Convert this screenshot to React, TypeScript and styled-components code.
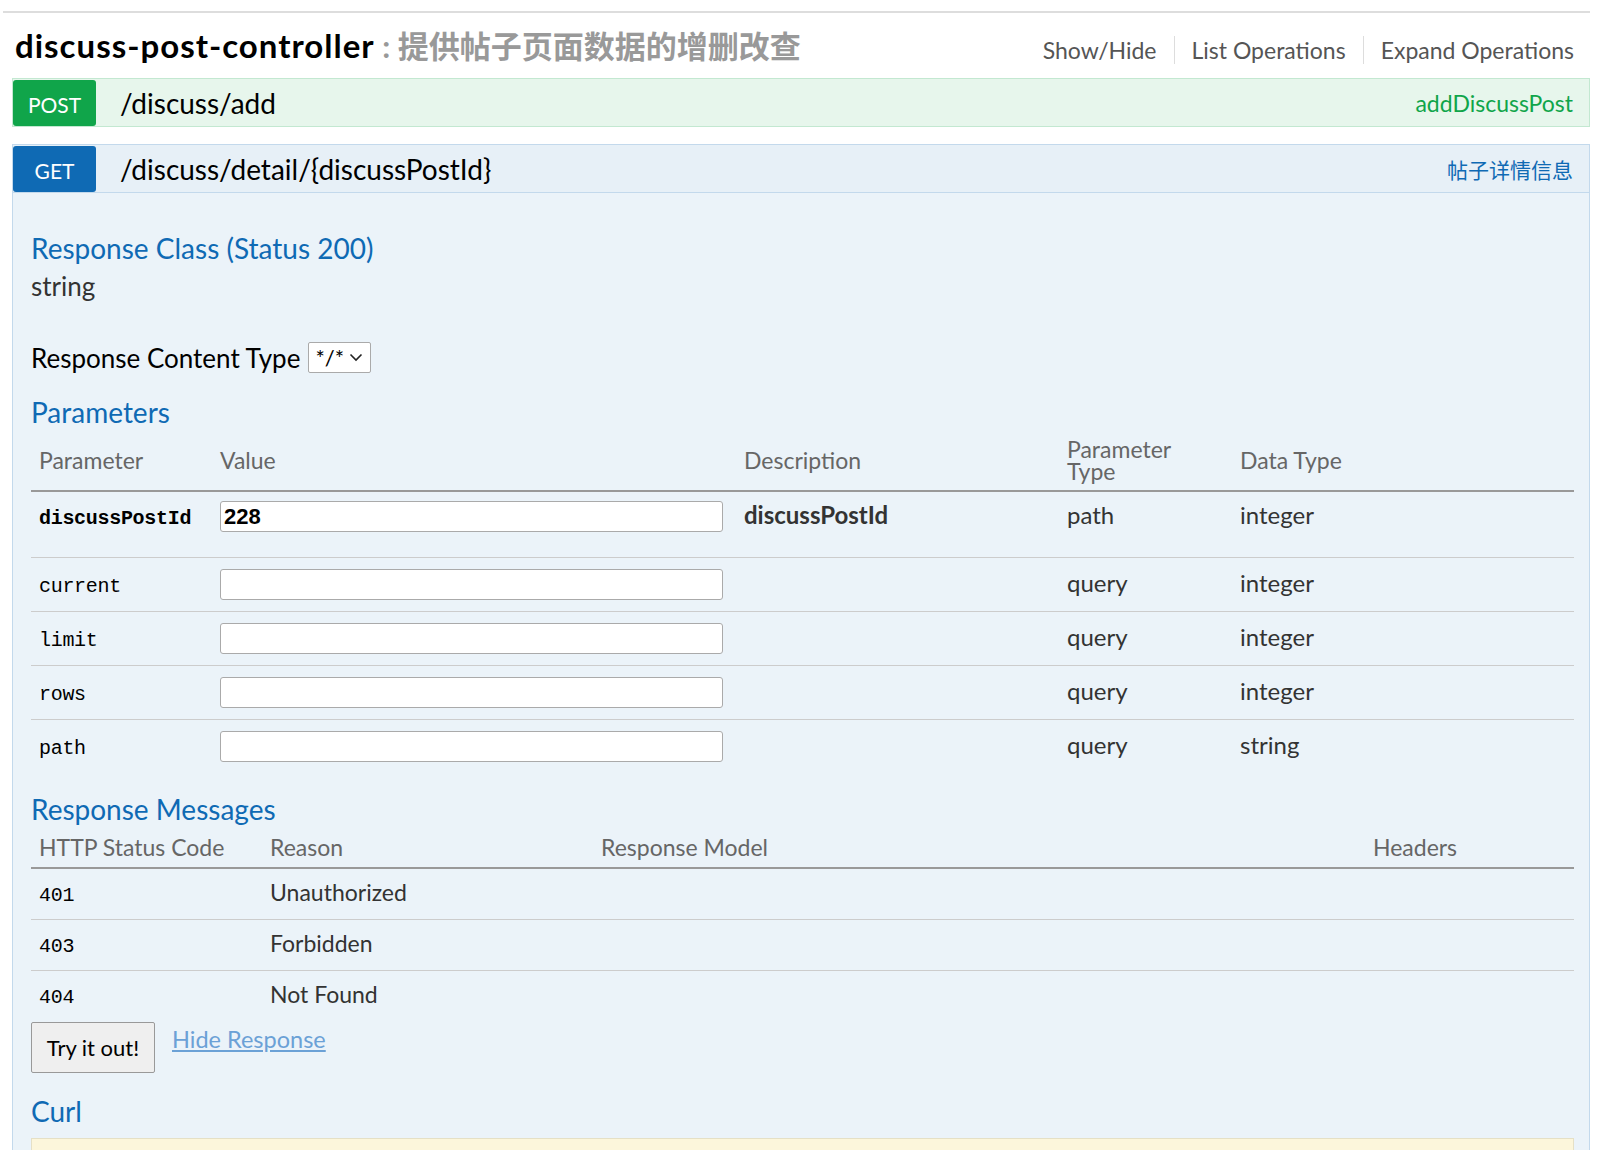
import styled, { createGlobalStyle } from "styled-components";

const SANS = `Lato, "Noto Sans CJK SC", sans-serif`;
const MONO = `"Liberation Mono", "DejaVu Sans Mono", monospace`;

const BLUE = "#0f6ab4";
const GREEN = "#10a54a";

const GlobalStyle = createGlobalStyle`
    html, body {
        margin: 0;
        padding: 0;
        background: #fff;
    }
    body {
        font-family: ${SANS};
        color: #333;
    }
`;

const Page = styled.div`
    padding: 11px 7px 0 3px;
`;

const Resource = styled.section`
    border-top: 2px solid #ddd;
`;

const ResourceHeading = styled.div`
    display: flex;
    align-items: center;
    justify-content: space-between;
    height: 65px;
    padding: 0 16px 0 12px;
`;

const Title = styled.h2`
    margin: 0 0 1px;
    font-size: 33px;
    line-height: 40px;
    font-weight: 700;
    letter-spacing: 1px;
    color: #000;
`;

const TitleNote = styled.span`
    font-size: 31px;
    letter-spacing: 0;
    color: #999;
`;

const Options = styled.ul`
    display: flex;
    align-items: center;
    list-style: none;
    margin: 9px 0 0;
    padding: 0;
`;

const OptionItem = styled.li`
    font-size: 23px;
    line-height: 28px;
    color: #555;
    padding: 0 17px;
    border-right: 1px solid #ddd;

    &:last-child {
        padding-right: 0;
        border-right: none;
    }
`;

const OperationBar = styled.div<{ $method: "post" | "get" }>`
    display: flex;
    align-items: stretch;
    box-sizing: border-box;
    height: 49px;
    margin: ${(p) => (p.$method === "post" ? "0 0 17px 9px" : "0 0 0 9px")};
    padding-top: 1px;
    background: ${(p) => (p.$method === "post" ? "#e7f6ec" : "#e7f0f7")};
    border: 1px solid
        ${(p) => (p.$method === "post" ? "#c3e8d1" : "#c3d9ec")};
`;

const MethodBadge = styled.span<{ $method: "post" | "get" }>`
    display: flex;
    align-items: center;
    justify-content: center;
    width: 83px;
    padding-top: 3px;
    box-sizing: border-box;
    border-radius: 3px;
    background: ${(p) => (p.$method === "post" ? GREEN : BLUE)};
    color: #fff;
    font-size: 21px;
`;

const PathText = styled.span`
    align-self: center;
    margin-left: 24px;
    font-size: 28px;
    color: #000;
`;

const Summary = styled.span<{ $method: "post" | "get" }>`
    align-self: center;
    margin-left: auto;
    padding-right: 16px;
    font-size: ${(p) => (p.$method === "post" ? 23 : 21)}px;
    color: ${(p) => (p.$method === "post" ? GREEN : BLUE)};
`;

const Content = styled.div`
    margin-left: 9px;
    background: #ebf3f9;
    border: 1px solid #c3d9ec;
    border-top: none;
    padding: 38px 15px 40px 18px;
`;

const SectionTitle = styled.h4<{ $gap?: number }>`
    margin: ${(p) => p.$gap ?? 0}px 0 0;
    font-size: 28px;
    line-height: 34px;
    font-weight: 400;
    color: ${BLUE};
`;

const Signature = styled.div`
    margin-top: 5px;
    font-size: 26px;
    line-height: 32px;
    color: #333;
`;

const ContentTypeRow = styled.div`
    display: flex;
    align-items: center;
    height: 31px;
    margin-top: 40px;
    font-size: 26px;
    color: #000;
`;

const FakeSelect = styled.span`
    display: inline-flex;
    align-items: center;
    justify-content: space-between;
    box-sizing: border-box;
    height: 31px;
    width: 63px;
    margin-left: 8px;
    padding: 0 7px 0 6px;
    background: #fff;
    border: 1px solid #aaa;
    border-radius: 2px;
    font-size: 22px;
    color: #000;
`;

const Table = styled.table`
    width: 100%;
    border-collapse: collapse;
    table-layout: fixed;
`;

const HeadCell = styled.th<{ $pad?: string }>`
    padding: ${(p) => p.$pad ?? "9px 8px 8px"};
    border-bottom: 2px solid #999;
    text-align: left;
    vertical-align: middle;
    font-size: 23px;
    line-height: 22px;
    font-weight: 400;
    color: #666;
`;

const Row = styled.tr<{ $divider?: boolean }>`
    & > td {
        border-bottom: ${(p) => (p.$divider ? "1px solid #ccc" : "none")};
    }
`;

const Cell = styled.td<{ $pad?: string; $size?: number }>`
    padding: ${(p) => p.$pad ?? "11px 8px"};
    vertical-align: top;
    font-size: ${(p) => p.$size ?? 24}px;
    line-height: 28px;
    color: #333;
`;

const CodeText = styled.span<{ $bold?: boolean }>`
    font-family: ${MONO};
    font-size: 20px;
    line-height: 1;
    letter-spacing: -0.3px;
    font-weight: ${(p) => (p.$bold ? 700 : 400)};
    color: #000;
`;

const ValueInput = styled.input`
    display: block;
    box-sizing: border-box;
    width: 503px;
    height: 31px;
    margin: 0;
    padding: 0 3px;
    background: #fff;
    border: 1px solid #aaa;
    border-radius: 3px;
    font-family: "Liberation Sans", Arial, sans-serif;
    font-size: 22px;
    font-weight: 700;
    color: #000;
    outline: none;
`;

const DescText = styled.p`
    margin: 0 0 17px;
    font-weight: 700;
    color: #333;
`;

const Actions = styled.div`
    display: flex;
    align-items: flex-start;
    margin-top: 1px;
`;

const TryButton = styled.button`
    width: 124px;
    height: 51px;
    padding: 0;
    background: #efefef;
    border: 1px solid #999;
    border-radius: 2px;
    font-family: ${SANS};
    font-size: 22px;
    color: #000;
    cursor: pointer;
`;

const HideLink = styled.a`
    margin-left: 17px;
    font-size: 23.5px;
    line-height: 34px;
    color: #6ba1d6;
    text-decoration: underline;
    cursor: pointer;
`;

const CurlBlock = styled.div`
    margin-top: 10px;
    height: 60px;
    background: #fcf6db;
    border: 1px solid #e5e0c6;
`;

const params = [
    { name: "discussPostId", value: "228", desc: "discussPostId", type: "path", dataType: "integer", required: true },
    { name: "current", value: "", desc: "", type: "query", dataType: "integer" },
    { name: "limit", value: "", desc: "", type: "query", dataType: "integer" },
    { name: "rows", value: "", desc: "", type: "query", dataType: "integer" },
    { name: "path", value: "", desc: "", type: "query", dataType: "string" },
];

const messages = [
    { code: "401", reason: "Unauthorized" },
    { code: "403", reason: "Forbidden" },
    { code: "404", reason: "Not Found" },
];

function Chevron() {
    return (
        <svg width="14" height="9" viewBox="0 0 14 9" aria-hidden="true">
            <polyline points="1.5,1.5 7,7 12.5,1.5" fill="none" stroke="#222" strokeWidth="1.6" />
        </svg>
    );
}

export default function App() {
    return (
        <>
            <GlobalStyle />
            <Page>
                <Resource>
                    <ResourceHeading>
                        <Title>
                            discuss-post-controller
                            <TitleNote> : 提供帖子页面数据的增删改查</TitleNote>
                        </Title>
                        <Options>
                            <OptionItem>Show/Hide</OptionItem>
                            <OptionItem>List Operations</OptionItem>
                            <OptionItem>Expand Operations</OptionItem>
                        </Options>
                    </ResourceHeading>

                    <OperationBar $method="post">
                        <MethodBadge $method="post">POST</MethodBadge>
                        <PathText>/discuss/add</PathText>
                        <Summary $method="post">addDiscussPost</Summary>
                    </OperationBar>

                    <OperationBar $method="get">
                        <MethodBadge $method="get">GET</MethodBadge>
                        <PathText>/discuss/detail/{"{discussPostId}"}</PathText>
                        <Summary $method="get">帖子详情信息</Summary>
                    </OperationBar>

                    <Content>
                        <SectionTitle>Response Class (Status 200)</SectionTitle>
                        <Signature>string</Signature>

                        <ContentTypeRow>
                            Response Content Type
                            <FakeSelect>
                                */*
                                <Chevron />
                            </FakeSelect>
                        </ContentTypeRow>

                        <SectionTitle $gap={22}>Parameters</SectionTitle>
                        <Table>
                            <colgroup>
                                <col style={{ width: 181 }} />
                                <col style={{ width: 524 }} />
                                <col style={{ width: 323 }} />
                                <col style={{ width: 173 }} />
                                <col />
                            </colgroup>
                            <thead>
                                <tr>
                                    <HeadCell>Parameter</HeadCell>
                                    <HeadCell>Value</HeadCell>
                                    <HeadCell>Description</HeadCell>
                                    <HeadCell>
                                        Parameter
                                        <br />
                                        Type
                                    </HeadCell>
                                    <HeadCell>Data Type</HeadCell>
                                </tr>
                            </thead>
                            <tbody>
                                {params.map((p, i) => {
                                    const pad = i === 0 ? "9px 8px 11px" : "11px 8px";
                                    return (
                                        <Row key={p.name} $divider={i < params.length - 1}>
                                            <Cell $pad={pad}>
                                                <CodeText $bold={p.required}>{p.name}</CodeText>
                                            </Cell>
                                            <Cell $pad={pad}>
                                                <ValueInput defaultValue={p.value} />
                                            </Cell>
                                            <Cell $pad={pad}>
                                                {p.desc && <DescText>{p.desc}</DescText>}
                                            </Cell>
                                            <Cell $pad={pad}>{p.type}</Cell>
                                            <Cell $pad={pad}>{p.dataType}</Cell>
                                        </Row>
                                    );
                                })}
                            </tbody>
                        </Table>

                        <SectionTitle $gap={19}>Response Messages</SectionTitle>
                        <Table>
                            <colgroup>
                                <col style={{ width: 231 }} />
                                <col style={{ width: 331 }} />
                                <col style={{ width: 772 }} />
                                <col />
                            </colgroup>
                            <thead>
                                <tr>
                                    <HeadCell $pad="10px 8px 9px">HTTP Status Code</HeadCell>
                                    <HeadCell $pad="10px 8px 9px">Reason</HeadCell>
                                    <HeadCell $pad="10px 8px 9px">Response Model</HeadCell>
                                    <HeadCell $pad="10px 8px 9px">Headers</HeadCell>
                                </tr>
                            </thead>
                            <tbody>
                                {messages.map((m, i) => (
                                    <Row key={m.code} $divider={i < messages.length - 1}>
                                        <Cell $pad="9px 8px 13px">
                                            <CodeText>{m.code}</CodeText>
                                        </Cell>
                                        <Cell $pad="9px 8px 13px" $size={23}>
                                            {m.reason}
                                        </Cell>
                                        <Cell $pad="9px 8px 13px" />
                                        <Cell $pad="9px 8px 13px" />
                                    </Row>
                                ))}
                            </tbody>
                        </Table>

                        <Actions>
                            <TryButton>Try it out!</TryButton>
                            <HideLink>Hide Response</HideLink>
                        </Actions>

                        <SectionTitle $gap={21}>Curl</SectionTitle>
                        <CurlBlock />
                    </Content>
                </Resource>
            </Page>
        </>
    );
}
